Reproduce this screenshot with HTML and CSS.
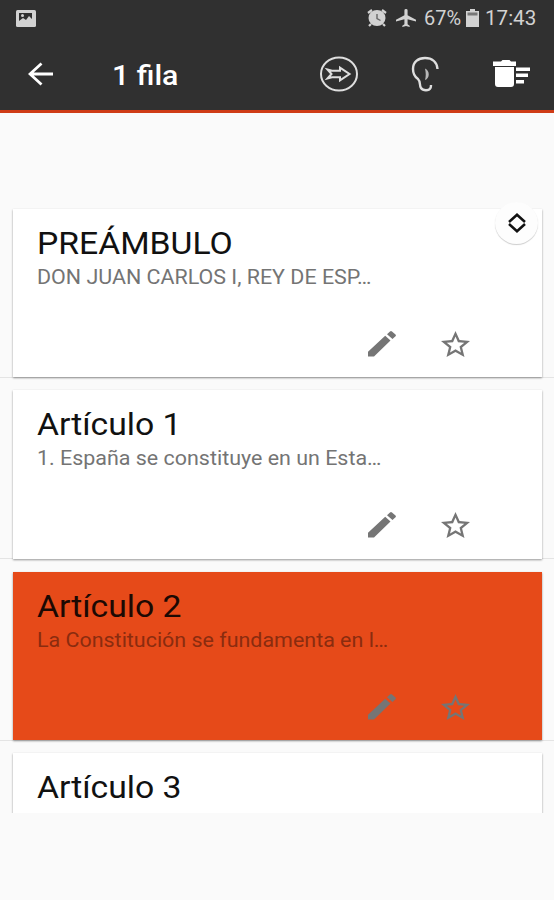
FILE: index.html
```html
<!DOCTYPE html>
<html lang="es">
<head>
<meta charset="utf-8">
<title>1 fila</title>
<link rel="stylesheet" href="styles.css">
</head>
<body>
<svg width="0" height="0" class="defs">
  <symbol id="pencil" viewBox="0 0 28 26" preserveAspectRatio="none"><path d="M0 25.500v-4.700L17.200 4.800l5.300 4.700L6 25.500zM19 3.300L22 .5q1-.8 2 0l3.500 3q.8.9 0 1.800l-3 2.800z"/></symbol>
  <symbol id="star" viewBox="2 2 20 19" preserveAspectRatio="none"><path d="M22 9.240l-7.190-.62L12 2 9.190 8.630 2 9.240l5.460 4.730L5.820 21 12 17.270 18.180 21l-1.630-7.030L22 9.240zM12 15.400l-3.760 2.270 1-4.280-3.320-2.880 4.380-.38L12 6.100l1.710 4.040 4.380.38-3.320 2.880 1 4.280L12 15.400z"/></symbol>
</svg>
<header class="header">
  <div class="status">
    <svg class="s-image" viewBox="0 0 20 17"><rect width="20" height="17" rx="1.500" fill="#d2d2d2"/><path d="M3 3h13v6l-3-3-3 4-3-2-4 3z" fill="#303030"/><circle cx="6.500" cy="5.500" r="1.500" fill="#d2d2d2"/></svg>
    <svg class="s-alarm" viewBox="0 0 20 18"><path d="M1 4l4-3M19 4l-4-3M4 15l-2 2M16 15l2 2" stroke="#d2d2d2" stroke-width="2.200"/><ellipse cx="10" cy="9" rx="8.500" ry="8" fill="#d2d2d2"/><path d="M10 5v4.500l3.500 2" fill="none" stroke="#666" stroke-width="1.400"/></svg>
    <svg class="s-plane" viewBox="2 2 19 20" preserveAspectRatio="none"><path fill="#d2d2d2" d="M21 16v-2l-8-5V3.500a1.500 1.500 0 0 0-3 0V9l-8 5v2l8-2.500V19l-2 1.500V22l3.500-1 3.500 1v-1.500L13 19v-5.500l8 2.500z"/></svg>
    <span class="pct"><span>67%</span></span>
    <svg class="s-batt" viewBox="0 0 13 18"><path d="M4 0h5v2h4v16H0V2h4z" fill="#d2d2d2"/><path d="M1.500 3.500h10v3h-10z" fill="#777"/></svg>
    <span class="clock"><span>17:43</span></span>
  </div>
  <div class="toolbar">
    <svg class="t-back" viewBox="0 0 26 24"><path d="M25 12H2M13.500 1.500L2 12l11.500 10.500" fill="none" stroke="#fff" stroke-width="2.800"/></svg>
    <h1 class="heading"><span>1 fila</span></h1>
    <svg class="t-arrow" viewBox="0 0 40 36"><ellipse cx="20" cy="18" rx="18" ry="16.500" fill="none" stroke="#dedede" stroke-width="2"/><path d="M8.500 13.500l4.500 1.200h8v-3L30.500 18 21 24.300v-3h-8l-4.500 1.200 4-4.500z" fill="none" stroke="#dedede" stroke-width="2"/></svg>
    <svg class="t-ear" viewBox="0 0 28 36"><path d="M26.500 13C26 6 21 2 14 2 7 2 2 6 2 13c0 5 2 8 5 10 3 3 1 6 3 9 2 3 8 3 9.500 0 .5-1 .5-2 .5-3" fill="none" stroke="#dedede" stroke-width="2.400"/><path d="M14 12.500c5 2 5 10 0 11.500 1-4 1-7 0-11.500z" fill="#b8b8b8"/></svg>
    <svg class="t-trash" viewBox="0 0 39 28"><path d="M1 1.500h8L10.500 0h7L19 1.500h5V6H1zM3 7h19v17q0 3-3 3H6q-3 0-3-3zM24 7.500h14V11H24zM24 13.500h12V17H24zM24 20h8v3.500h-8z" fill="#fff"/></svg>
  </div>
</header>
<main class="list">
  <section class="row"><article class="card">
    <h2 class="title"><span>PREÁMBULO</span></h2>
    <p class="text"><span>DON JUAN CARLOS I, REY DE ESP…</span></p>
    <div class="actions"><svg class="pencil"><use href="#pencil"/></svg><svg class="star"><use href="#star"/></svg></div>
    <div class="sorter"><svg viewBox="0 0 20 20"><path d="M2 9L10 1.800l8 7.200M2 11l8 7.200 8-7.200" fill="none" stroke="#111" stroke-width="2.500"/></svg></div>
  </article></section>
  <section class="row"><article class="card">
    <h2 class="title"><span>Artículo 1</span></h2>
    <p class="text"><span>1. España se constituye en un Esta…</span></p>
    <div class="actions"><svg class="pencil"><use href="#pencil"/></svg><svg class="star"><use href="#star"/></svg></div>
  </article></section>
  <section class="row"><article class="card selected">
    <h2 class="title"><span>Artículo 2</span></h2>
    <p class="text"><span>La Constitución se fundamenta en l…</span></p>
    <div class="actions"><svg class="pencil"><use href="#pencil"/></svg><svg class="star"><use href="#star"/></svg></div>
  </article></section>
  <section class="row"><article class="card">
    <h2 class="title"><span>Artículo 3</span></h2>
  </article></section>
</main>
</body>
</html>
```

FILE: styles.css
```css
* { box-sizing: border-box; }
body {
  margin: 0;
  height: 900px;
  overflow: hidden;
  background: #fafafa;
  font-family: Roboto, "Liberation Sans", sans-serif;
}
svg { display: block; flex: none; }
.defs { position: absolute; }
h1, h2, p { margin: 0; font-weight: 400; white-space: nowrap; }
h1 span, h2 span, p span, .pct span, .clock span {
  display: inline-block;
  transform-origin: left center;
}

.header {
  height: 113px;
  background: #303030;
  border-bottom: 3px solid #cf3c16;
}
.status {
  display: flex;
  align-items: center;
  height: 36px;
  padding-left: 16px;
  color: #d2d2d2;
  font-size: 21px;
  line-height: 36px;
}
.s-image { width: 20px; height: 17px; margin-right: 331px; }
.s-alarm { width: 20px; height: 18px; margin-right: 9px; }
.s-plane { width: 20px; height: 18px; margin-right: 8px; }
.pct { width: 42px; }
.pct span { transform: scaleX(0.95); }
.s-batt { width: 13px; height: 18px; margin-right: 6px; }
.clock span { transform: scaleX(0.98); }

.toolbar {
  display: flex;
  align-items: center;
  height: 75px;
  padding-left: 28px;
}
.t-back { width: 26px; height: 24px; }
.heading {
  flex: none;
  width: 207px;
  margin-left: 58px;
  padding-top: 3px;
  font-size: 27.500px;
  font-weight: 500;
  line-height: 71px;
  color: #fff;
}
.heading span { transform: scaleX(1.1); }
.t-arrow { width: 40px; height: 36px; }
.t-ear { width: 28px; height: 36px; margin-left: 52px; }
.t-trash { width: 39px; height: 28px; margin-left: 53px; }

.list {
  height: 700px;
  padding-top: 83px;
  overflow: hidden;
}
.row {
  height: 181.600px;
  padding: 12.500px 12px 0 13px;
  border-bottom: 1px solid #e4e4e4;
}
.card {
  position: relative;
  height: 168.500px;
  padding: 17px 0 0 24px;
  background: #fff;
  box-shadow: 0 1px 2px rgba(0, 0, 0, 0.4);
}
.title {
  height: 36px;
  font-size: 30.500px;
  line-height: 36px;
  color: #111;
}
.title span { transform: scaleX(1.105); }
.text {
  height: 30px;
  font-size: 20px;
  line-height: 30px;
  color: #747474;
}
.text span { transform: scaleX(1.072); }
.actions {
  display: flex;
  align-items: center;
  padding: 39px 0 0 331px;
  fill: #757575;
}
.pencil { width: 28px; height: 26px; }
.star { width: 29px; height: 26px; margin-left: 45px; }
.selected { background: #e64a19; }
.selected .title { color: #1c0903; }
.selected .text { color: #8a2c0f; }
.sorter {
  position: absolute;
  top: -7px;
  right: 4px;
  display: flex;
  align-items: center;
  justify-content: center;
  width: 43px;
  height: 42px;
  border-radius: 50%;
  background: #fdfdfd;
  box-shadow: 0 1px 1px rgba(0, 0, 0, 0.2);
}
.sorter svg { width: 20px; height: 20px; }
```
